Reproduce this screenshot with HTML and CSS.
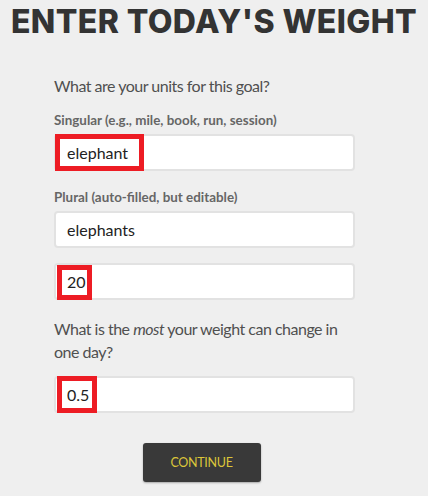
FILE: index.html
```html
<!DOCTYPE html>
<html lang="en">
<head>
<meta charset="utf-8">
<title>Enter Today's Weight</title>
<link rel="stylesheet" href="styles.css">
</head>
<body>
<main class="page">
  <h1 class="title">ENTER TODAY'S WEIGHT</h1>
  <form class="form">
    <p class="question">What are your units for this goal?</p>
    <label class="label" for="singular">Singular (e.g., mile, book, run, session)</label>
    <div class="field">
      <input class="input" id="singular" type="text" value="elephant">
      <span class="mark mark-singular"></span>
    </div>
    <label class="label label-plural" for="plural">Plural (auto-filled, but editable)</label>
    <div class="field">
      <input class="input" id="plural" type="text" value="elephants">
    </div>
    <div class="field field-value">
      <input class="input" type="text" value="20">
      <span class="mark mark-value"></span>
    </div>
    <p class="question question-max">What is the <em>most</em> your weight can change in one day?</p>
    <div class="field field-max">
      <input class="input" type="text" value="0.5">
      <span class="mark mark-max"></span>
    </div>
    <div class="actions">
      <button class="button" type="button">CONTINUE</button>
    </div>
  </form>
</main>
</body>
</html>
```

FILE: styles.css
```css
* { box-sizing: border-box; }
html, body { margin: 0; padding: 0; }
body {
  background: #efefef;
  font-family: Lato, "Open Sans", sans-serif;
  color: #555;
  width: 428px;
  height: 496px;
  overflow: hidden;
}
.page { padding-top: 3px; }
.title {
  margin: 0;
  text-align: center;
  font-family: Inter, "Liberation Sans", sans-serif;
  font-weight: 800;
  font-size: 32px;
  line-height: 38px;
  color: #333;
  letter-spacing: 0.4px;
  white-space: nowrap;
}
.form {
  margin-left: 54px;
  width: 301px;
  padding-top: 33px;
}
.question {
  margin: 0;
  font-size: 16px;
  line-height: 23px;
  letter-spacing: -0.5px;
  color: #505050;
}
.question em { font-style: italic; }
.label {
  display: block;
  margin-top: 14px;
  font-size: 13.4px;
  font-weight: 700;
  line-height: 18px;
  color: #666;
}
.label-plural { margin-top: 17px; }
.field {
  position: relative;
  margin-top: 5px;
}
.field-value { margin-top: 15px; }
.field-max { margin-top: 13px; }
.input {
  display: block;
  width: 100%;
  height: 37px;
  border: 2px solid #e2e2e2;
  border-radius: 4px;
  background: #fff;
  padding: 0 11px;
  font-family: Lato, "Open Sans", sans-serif;
  font-size: 16px;
  color: #222;
  outline: none;
}
.mark {
  position: absolute;
  border: 5px solid #ed1c24;
  pointer-events: none;
}
.mark-singular { left: 1px; top: 0; width: 89px; height: 37px; }
.mark-value { left: 3px; top: 2px; width: 35px; height: 35px; }
.mark-max { left: 3px; top: 0; width: 40px; height: 37px; }
.question-max { margin-top: 17px; }
.actions {
  display: flex;
  justify-content: center;
  margin-top: 30px;
  padding-right: 6px;
}
.button {
  width: 118px;
  height: 39px;
  border: none;
  border-radius: 3px;
  background: #393939;
  color: #dcc63a;
  font-family: Lato, "Open Sans", sans-serif;
  font-size: 12.5px;
  letter-spacing: -0.3px;
  box-shadow: 0 1px 2px rgba(0,0,0,0.3);
}
```
